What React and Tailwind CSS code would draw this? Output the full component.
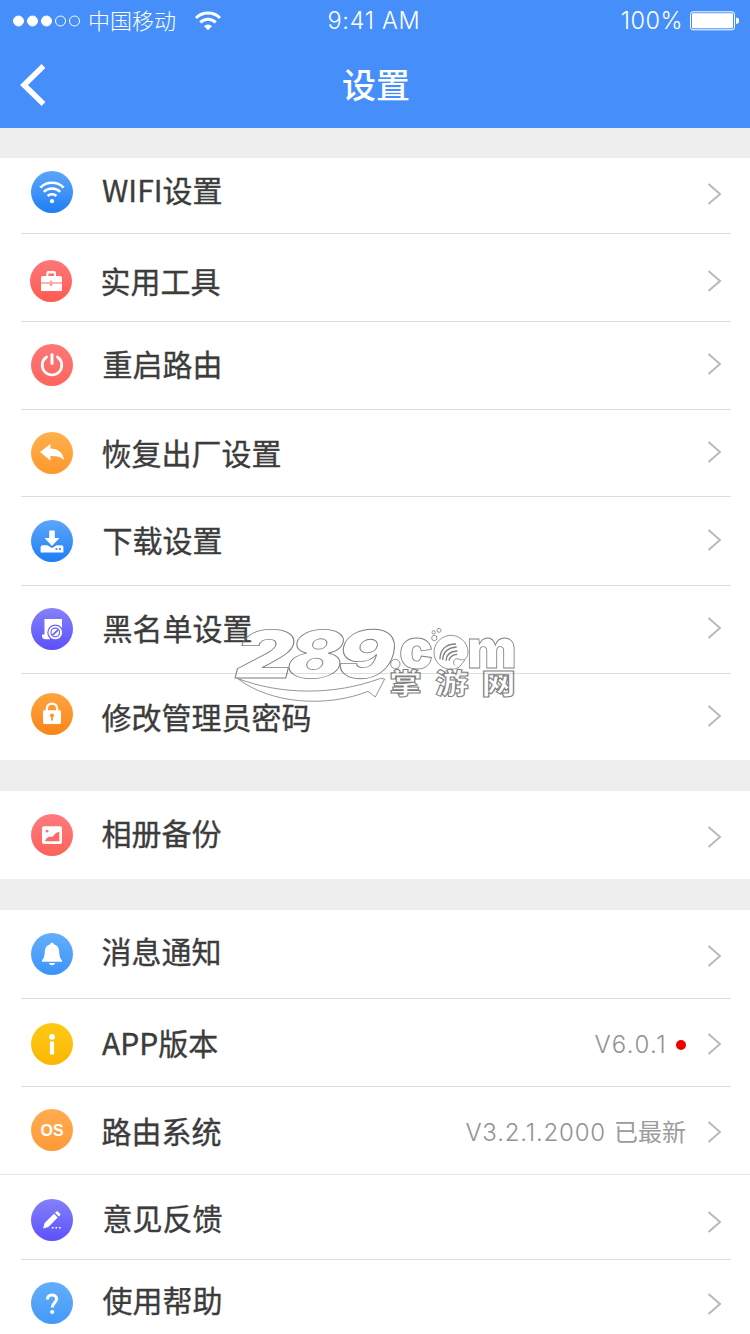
import { Fragment } from 'react';

/* ── Row glyphs, drawn on a 42x42 grid ────────────── */
const WifiGlyph = () => (
  <g fill="none" stroke="white" strokeWidth="2.6">
    <path d="M9.3 16.6a16.6 16.6 0 0 1 23.4 0" />
    <path d="M12.8 20.9a11.7 11.7 0 0 1 16.4 0" />
    <path d="M16.6 25a6.4 6.4 0 0 1 8.8 0" />
    <circle cx="21" cy="30.2" r="2.1" fill="white" stroke="none" />
  </g>
);

const ToolboxGlyph = () => (
  <g fill="white">
    <path d="M16.4 17v-4.2a1.8 1.8 0 0 1 1.8-1.8h6a1.8 1.8 0 0 1 1.8 1.8V17h-2v-3.6h-5.6V17z" />
    <path d="M13 16h17a2 2 0 0 1 2 2v4.4h-9.8v-1.6h-2.4v1.6H11V18a2 2 0 0 1 2-2z" />
    <path d="M11 23.6h8.8v1.8h2.4v-1.8H32v7.5H11z" />
    <path d="M20.5 21.2h1v3.4h-1z" />
  </g>
);

const PowerGlyph = () => (
  <g fill="none" stroke="white" strokeWidth="2.7" strokeLinecap="round">
    <path d="M15.6 13a9.8 9.8 0 1 0 10.8 0" />
    <path d="M21 10.6v9" strokeWidth="3" />
  </g>
);

const ReplyGlyph = () => (
  <path d="M9 20l10.4-8v4.6c7.6.3 12.6 3.8 13.6 11.4-3.4-3.4-7.8-4.2-13.6-4v4.6z" fill="white" />
);

const DownloadGlyph = () => (
  <g>
    <path d="M18.2 10.5h5.6v7.6h4.6L21 26l-7.4-7.9h4.6z" fill="white" />
    <path d="M11.4 25.2h4.8L21 28l4.8-2.8h4.8a1.8 1.8 0 0 1 1.8 1.8v5.6H9.6V27a1.8 1.8 0 0 1 1.8-1.8z" fill="white" />
    <path d="M24.5 29h1.8M28 29h1.8" stroke="#3f95fb" strokeWidth="1.8" />
  </g>
);

const BlacklistGlyph = () => (
  <g>
    <path d="M13.5 11H31v13H19v7.2h-4.6a3.4 3.4 0 0 1-3.4-3.4v-1.3h2.5z" fill="white" />
    <circle cx="24.3" cy="24.5" r="8" fill="#6f63f8" />
    <circle cx="24.3" cy="24.5" r="6.8" fill="white" />
    <circle cx="24.3" cy="24.5" r="4.3" fill="none" stroke="#6a60f8" strokeWidth="1.2" />
    <path d="M21.6 27.2l5.4-5.4" stroke="#6a60f8" strokeWidth="1.8" />
  </g>
);

const LockGlyph = () => (
  <g>
    <path d="M15.8 18v-2.2a5.2 5.2 0 0 1 10.4 0V18" fill="none" stroke="white" strokeWidth="2.4" />
    <rect x="12" y="17.3" width="18" height="13.6" rx="1.4" fill="white" />
    <circle cx="21" cy="22.4" r="2" fill="#ff9420" />
    <path d="M20.1 22.5h1.8v5h-1.8z" fill="#ff9420" />
  </g>
);

const AlbumGlyph = () => (
  <g>
    <rect x="11" y="12.3" width="20" height="17.6" rx="2" fill="white" />
    <path d="M14 27.2c1.4-3.6 3.4-4.8 6-4.3 2.8.5 3.3-4.6 8.3-5.2v9.5z" fill="#ff6a68" />
    <circle cx="16" cy="17.2" r="1.4" fill="#ff7472" />
  </g>
);

const BellGlyph = () => (
  <g fill="white">
    <path d="M21 9.7c1 0 1.7.7 1.8 1.6 3.4.9 5.2 3.6 5.4 7 .2 5 .8 7 2.8 9v1.5H11v-1.5c2-2 2.6-4 2.8-9 .2-3.4 2-6.1 5.4-7 .1-.9.8-1.6 1.8-1.6z" />
    <path d="M17.8 30h6.4a3.3 3 0 0 1-6.4 0z" />
  </g>
);

const InfoGlyph = () => (
  <g fill="white">
    <circle cx="21" cy="13.8" r="2.9" />
    <path d="M18.9 18.6h4.2v13h-4.2z" />
  </g>
);

const OsGlyph = () => (
  <text x="21" y="27" fill="white" textAnchor="middle" className="font-['Liberation_Sans'] text-[16px] font-bold">
    OS
  </text>
);

const PencilGlyph = () => (
  <g fill="white">
    <path d="M13.6 24.1l9.3-9.3 3.8 3.8-9.3 9.3-5.3 1.7z" />
    <path d="M24 13.7l1-1a1.5 1.5 0 0 1 2.1 0l1.8 1.8a1.5 1.5 0 0 1 0 2.1l-1 1z" />
    <path d="M20.8 27.9h1.7v1.7h-1.7zM24.4 27.9h1.7v1.7h-1.7zM28 27.9h1.7v1.7H28z" />
  </g>
);

const HelpGlyph = () => (
  <g>
    <path d="M16.4 17.6c0-3 1.9-4.7 4.6-4.7s4.6 1.6 4.6 4.1c0 3.6-4.4 3.8-4.4 8.6" fill="none" stroke="white" strokeWidth="3" />
    <circle cx="21.2" cy="30" r="2.1" fill="white" />
  </g>
);

/* ── Menu data ────────────────────────────────────── */
const BLUE = 'from-[#5ba6fb] to-[#1d7df5]';
const LIGHT_BLUE = 'from-[#63aefb] to-[#3b93f8]';
const RED = 'from-[#fe7779] to-[#fd5a50]';
const ORANGE = 'from-[#ffb04c] to-[#fe982b]';
const PURPLE = 'from-[#8580f8] to-[#5d4ffb]';

const GROUPS = [
  [
    { label: 'WIFI设置', Glyph: WifiGlyph, tint: BLUE, row: 'h-[75px]', icon: 'mt-[13px] ml-[31px]', text: 'mt-[16px] ml-[29px]', arrow: 'mt-[25px]' },
    { label: '实用工具', Glyph: ToolboxGlyph, tint: RED, row: 'h-[87px]', icon: 'mt-[26px] ml-[30px]', text: 'mt-[31px] ml-[28.5px]', arrow: 'mt-[36px]' },
    { label: '重启路由', Glyph: PowerGlyph, tint: 'from-[#ff7678] to-[#fc665d]', row: 'h-[87px]', icon: 'mt-[22px] ml-[31px]', text: 'mt-[26px] ml-[29.5px]', arrow: 'mt-[31px]' },
    { label: '恢复出厂设置', Glyph: ReplyGlyph, tint: ORANGE, row: 'h-[86px]', icon: 'mt-[22px] ml-[31px]', text: 'mt-[27px] ml-[28.5px]', arrow: 'mt-[31px]' },
    { label: '下载设置', Glyph: DownloadGlyph, tint: BLUE, row: 'h-[88px]', icon: 'mt-[23px] ml-[31px]', text: 'mt-[27px] ml-[29.5px]', arrow: 'mt-[32px]' },
    { label: '黑名单设置', Glyph: BlacklistGlyph, tint: PURPLE, row: 'h-[87px]', icon: 'mt-[22px] ml-[31px]', text: 'mt-[26px] ml-[29.5px]', arrow: 'mt-[31px]' },
    { label: '修改管理员密码', Glyph: LockGlyph, tint: 'from-[#ffa53f] to-[#f98415]', row: 'h-[86px]', icon: 'mt-[19px] ml-[31px]', text: 'mt-[27px] ml-[28.5px]', arrow: 'mt-[31px]' },
  ],
  [
    { label: '相册备份', Glyph: AlbumGlyph, tint: 'from-[#ff7b7e] to-[#fd6259]', row: 'h-[88px]', icon: 'mt-[23px] ml-[31px]', text: 'mt-[26px] ml-[28.5px]', arrow: 'mt-[35px]' },
  ],
  [
    { label: '消息通知', Glyph: BellGlyph, tint: LIGHT_BLUE, row: 'h-[88px]', icon: 'mt-[23px] ml-[31px]', text: 'mt-[25px] ml-[28.5px]', arrow: 'mt-[35px]' },
    { label: 'APP版本', Glyph: InfoGlyph, tint: 'from-[#fdc914] to-[#fbb705]', row: 'h-[87px]', icon: 'mt-[24px] ml-[31px]', text: 'mt-[28px] ml-[29px]', arrow: 'mt-[34px]', value: 'V6.0.1', dot: true },
    { label: '路由系统', Glyph: OsGlyph, tint: 'from-[#ffac51] to-[#fd9a36]', row: 'h-[87px]', icon: 'mt-[22px] ml-[31px]', text: 'mt-[28px] ml-[28.5px]', arrow: 'mt-[34px]', value: 'V3.2.1.2000', status: '已最新' },
    { label: '意见反馈', Glyph: PencilGlyph, tint: PURPLE, row: 'h-[84px]', icon: 'mt-[24px] ml-[31px]', text: 'mt-[27px] ml-[29.5px]', arrow: 'mt-[36px]', fullLine: true },
    { label: '使用帮助', Glyph: HelpGlyph, tint: 'from-[#63aefb] to-[#4399f9]', row: 'h-[74px]', icon: 'mt-[22px] ml-[31px]', text: 'mt-[24px] ml-[29.5px]', arrow: 'mt-[33px]' },
  ],
];

function StatusBar() {
  return (
    <div className="relative flex h-[41px] items-center justify-between pr-[11px] pl-[12px] font-['Inter','Noto_Sans_CJK_SC',sans-serif] font-light">
      <div className="flex items-center">
        <svg className="mr-[6px]" width="70" height="12" viewBox="0 0 70 12" fill="white" stroke="white">
          <circle cx="6.5" cy="6" r="5" />
          <circle cx="20.5" cy="6" r="5" />
          <circle cx="34.5" cy="6" r="5" />
          <circle cx="48.5" cy="6" r="5" fill="none" />
          <circle cx="62.5" cy="6" r="5" fill="none" />
        </svg>
        <span className="text-[22px] leading-[22px]">中国移动</span>
        <svg className="ml-[18px]" width="28" height="20" viewBox="0 0 28 20" fill="none" stroke="white" strokeWidth="3">
          <path d="M2 7a17 17 0 0 1 24 0" />
          <path d="M6.3 11.5a10.9 10.9 0 0 1 15.4 0" />
          <path d="M14 19.2l-4-4a5.7 5.7 0 0 1 8 0z" fill="white" stroke="none" />
        </svg>
      </div>
      <span className="absolute top-[9px] left-[327.5px] text-[23.5px] leading-6 tracking-[0.7px]">9:41 AM</span>
      <div className="flex items-center gap-[7px]">
        <span className="text-[23.5px] leading-6 tracking-[0.5px]">100%</span>
        <svg width="49" height="20" viewBox="0 0 49 20" fill="white">
          <rect x="0.5" y="0.8" width="44" height="18" rx="2.5" fill="none" stroke="white" />
          <rect x="2" y="2.3" width="41" height="15" rx="1" />
          <path d="M46 6.8h1a2 2 0 0 1 2 2v2a2 2 0 0 1-2 2h-1z" />
        </svg>
      </div>
    </div>
  );
}

function SettingsRow({ item }) {
  const { label, Glyph, tint, row, icon, text, arrow, value, status, dot } = item;
  return (
    <div className={`flex items-start pr-[28px] ${row}`}>
      <div className={`size-[42px] shrink-0 rounded-full bg-linear-to-b ${tint} ${icon}`}>
        <svg width="42" height="42" viewBox="0 0 42 42"><Glyph /></svg>
      </div>
      <span className={`text-[30px] leading-[30px] whitespace-nowrap text-[#3c3c3c] [-webkit-text-stroke:0.35px_#3c3c3c] ${text}`}>{label}</span>
      <div className={`ml-auto flex h-[22px] items-center ${arrow}`}>
        {value && (
          <span className={`mt-[2px] font-['Inter','Noto_Sans_CJK_SC',sans-serif] text-[24px] leading-6 font-light text-[#929292] ${dot ? 'tracking-[1.4px]' : 'tracking-[0.8px]'}`}>{value}</span>
        )}
        {status && <span className="-mt-[2px] ml-[8px] text-[24px] leading-6 text-[#9b9b9b]">{status}</span>}
        {dot && <span className="mt-[2px] ml-[9px] size-[10px] rounded-full bg-[#f20000]" />}
        <svg className="ml-[21px]" width="15" height="22" viewBox="0 0 15 22" fill="none" stroke="#b9b9b9" strokeWidth="2">
          <path d="M1.5 1l11.5 10L1.5 21" />
        </svg>
      </div>
    </div>
  );
}

/* Outlined site mark lying over the list */
function SiteMark() {
  return (
    <svg className="pointer-events-none absolute top-[610px] left-[220px]" width="310" height="110" viewBox="0 0 930 330" fill="none" stroke="#808080" strokeWidth="2.5">
      <g transform="translate(0 203) skewX(-14)" className="font-['Inter'] text-[198px] font-black">
        <text x="32" y="0" textLength="176" lengthAdjust="spacingAndGlyphs">2</text>
        <text x="190" y="0" textLength="168" lengthAdjust="spacingAndGlyphs">8</text>
        <text x="339" y="0" textLength="172" lengthAdjust="spacingAndGlyphs">9</text>
      </g>
      <path d="M52 205c130 50 290 52 430 0l12 2-28 54-22-17c-120 48-290 40-392-39z" />
      <circle cx="526" cy="162" r="14" />
      <text x="537" y="174" textLength="102" lengthAdjust="spacingAndGlyphs" className="font-['Inter'] text-[162px] font-black">c</text>
      <path d="M735 150l-18 22a51 51 0 1 1 27-46c0 16-10 30-29 21-14-4-18 12-10 20" />
      <path d="M660 148c0-30 18-46 48-46M668 150c1-24 14-37 42-39M678 152c1-18 12-28 34-29M687 152c2-12 9-18 25-19" strokeWidth="4" />
      <circle cx="643" cy="84" r="8" />
      <circle cx="641" cy="67" r="5" />
      <circle cx="657" cy="61" r="6" />
      <text x="740" y="174" textLength="150" lengthAdjust="spacingAndGlyphs" className="font-['Inter'] text-[162px] font-black">m</text>
      <g className="font-['Noto_Sans_CJK_SC'] text-[84px] font-black" strokeWidth="3">
        <text x="508" y="253" textLength="98" lengthAdjust="spacingAndGlyphs">掌</text>
        <text x="646" y="253" textLength="100" lengthAdjust="spacingAndGlyphs">游</text>
        <text x="784" y="253" textLength="104" lengthAdjust="spacingAndGlyphs">网</text>
      </g>
    </svg>
  );
}

export default function App() {
  return (
    <div className="relative h-[1334px] w-[750px] overflow-hidden bg-[#eeeeee] font-['Noto_Sans_CJK_SC',sans-serif]">
      {/* ── Header ─────────────────────────────────── */}
      <header className="h-[128px] bg-[#468ffa] text-white">
        <StatusBar />
        <div className="grid h-[87px] grid-cols-[1fr_auto_1fr] items-center pl-[20px]">
          <svg width="26" height="42" viewBox="0 0 26 42" fill="none" stroke="white" strokeWidth="5.5">
            <path d="M23.5 2L4 21l19.5 19" />
          </svg>
          <h1 className="mr-[18px] -mt-[2px] text-[34px] leading-[34px] font-medium">设置</h1>
        </div>
      </header>

      {/* ── Setting groups ─────────────────────────── */}
      <main className="flex flex-col gap-[31px] pt-[30px]">
        {GROUPS.map((items) => (
          <section key={items[0].label} className="bg-white">
            {items.map((item, i) => (
              <Fragment key={item.label}>
                {i > 0 && <div className={item.fullLine ? 'h-px bg-[#e6e6e6]' : 'mr-[19px] ml-[21px] h-px bg-[#dedede]'} />}
                <SettingsRow item={item} />
              </Fragment>
            ))}
          </section>
        ))}
      </main>

      <SiteMark />
    </div>
  );
}
